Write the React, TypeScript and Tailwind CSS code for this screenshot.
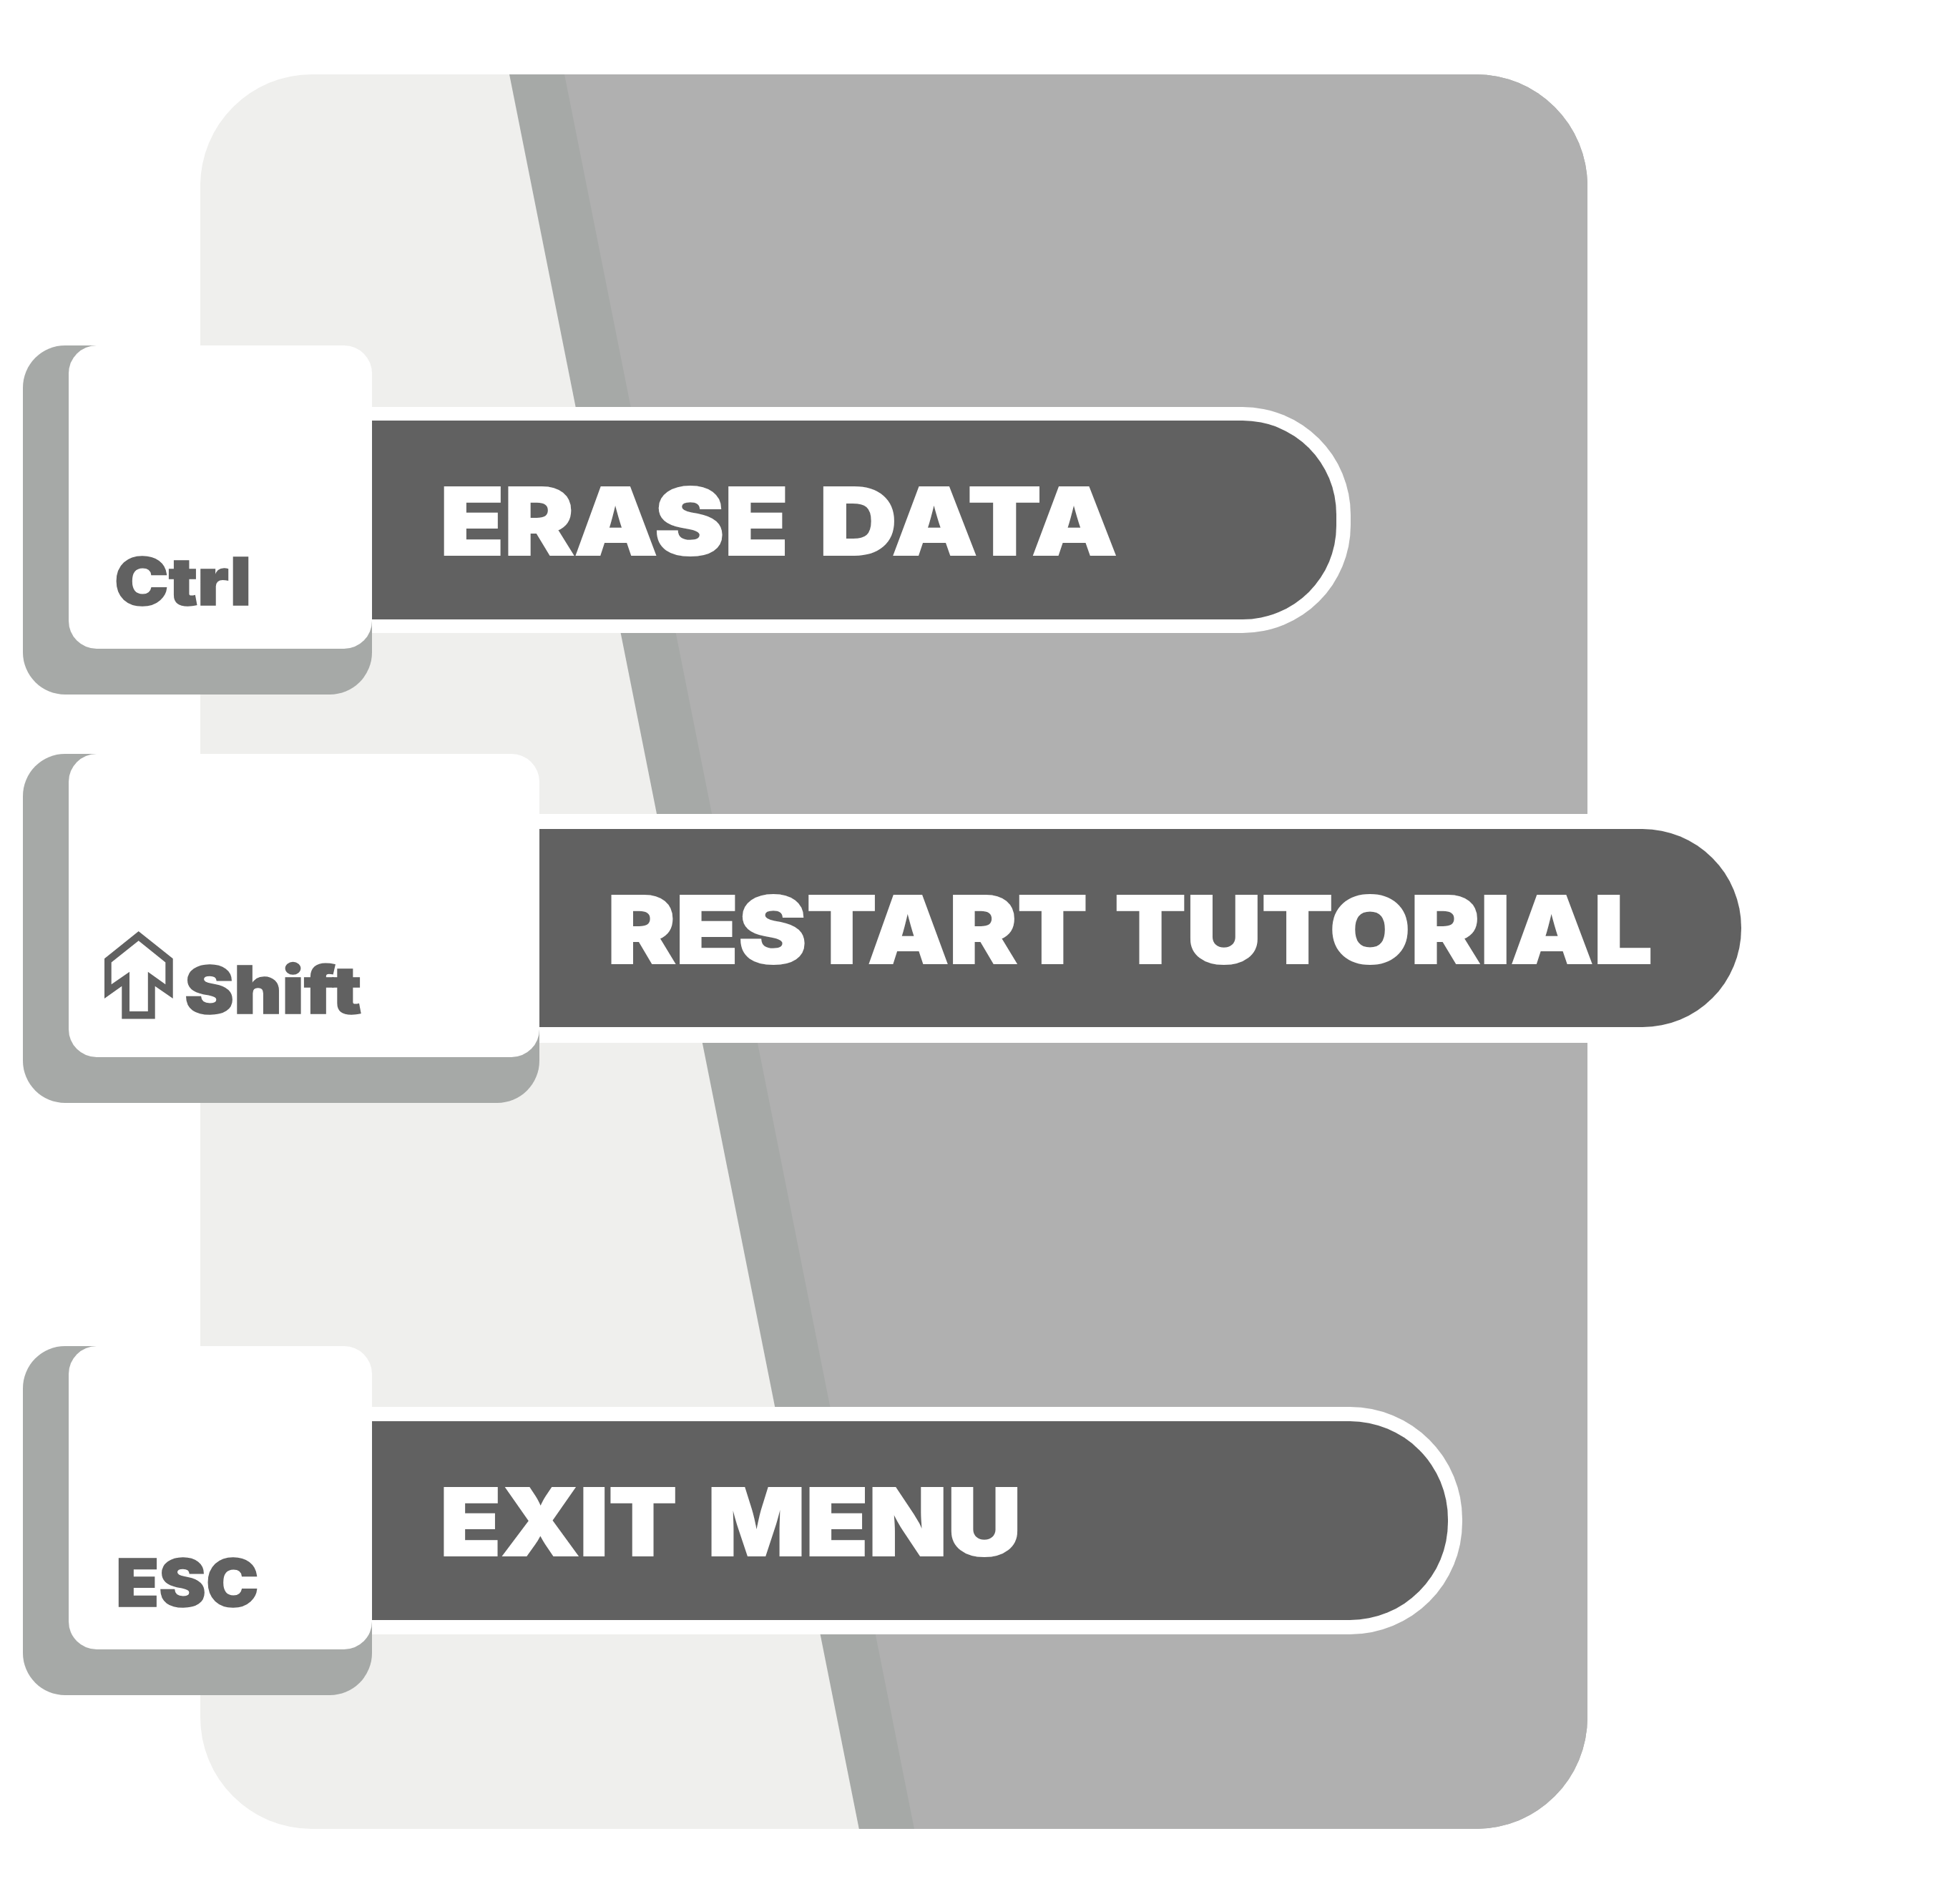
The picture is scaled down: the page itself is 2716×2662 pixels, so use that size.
import React from "react";

function Backdrop() {
  return (
    <div className="ml-[280px] mt-[104px] h-[2453px] w-[1939px] overflow-hidden rounded-[156px] bg-[#efefed]">
      <svg viewBox="0 0 1939 2453" className="block h-full w-full">
        <polygon points="432,0 1939,0 1939,2453 920.8,2453" fill="#a6a9a7" />
        <polygon points="509,0 1939,0 1939,2453 998,2453" fill="#b0b0b0" />
      </svg>
    </div>
  );
}

function ShiftArrow() {
  return (
    <svg viewBox="0 0 96 123" className="mb-[53.5px] h-[123px] w-[96px] shrink-0">
      <path
        fill="#616161"
        fillRule="evenodd"
        d="M47.7 0 95.7 38.3V94L70.7 76.7V122.5H24.3V76.7L0 94V38.3ZM47.7 13.3 9.7 43.5V74.3L35 56.8V112H60.8V56.8L85.3 74.3V43.5Z"
      />
    </svg>
  );
}

function KeyCap({ wide = false, children }: { wide?: boolean; children: React.ReactNode }) {
  return (
    <div className={`h-[488px] shrink-0 rounded-[59px] bg-[#a6a9a7] pl-[64px] ${wide ? "w-[722px]" : "w-[488px]"}`}>
      <div className="flex h-[424px] items-end rounded-[39px] bg-white">{children}</div>
    </div>
  );
}

const keyText =
  "mb-[48px] block origin-left whitespace-nowrap text-[91.7px] leading-none font-black text-[#616161] [-webkit-text-stroke:1.5px_#616161]";
const barText =
  "flex text-[130.7px] leading-none font-black text-white [-webkit-text-stroke:2px_white]";

export default function App() {
  return (
    <div className="grid h-[2662px] w-[2716px] overflow-hidden bg-white font-['Inter',sans-serif]">
      <div className="col-start-1 row-start-1">
        <Backdrop />
      </div>

      <div className="col-start-1 row-start-1 flex flex-col pt-[483px] pl-[32.4px]">
        <div className="flex items-start">
          <KeyCap>
            <span className={`${keyText} ml-[63.5px] scale-x-[1.104]`}>Ctrl</span>
          </KeyCap>
          <div className="mt-[86px] h-[316px] w-[1367.5px] rounded-r-[151px] bg-white pt-[19px] pr-[19.5px] pb-[19px]">
            <div className="h-full rounded-r-[131px] bg-[#616161] pt-[76px] pl-[94.2px]">
              <div className={barText}>
                <span className="block w-[530.2px] shrink-0"><span className="inline-block origin-left scale-x-[1.121]">ERASE</span></span>
                <span className="inline-block origin-left scale-x-[1.153]">DATA</span>
              </div>
            </div>
          </div>
        </div>

        <div className="mt-[83px] flex items-start">
          <KeyCap wide>
            <div className="ml-[49.5px] flex items-end">
              <ShiftArrow />
              <span className={`${keyText} ml-[16.5px] scale-x-[1.1295]`}>Shift</span>
            </div>
          </KeyCap>
          <div className="mt-[83.6px] h-[320px] w-[1700px] rounded-r-[160px] bg-white pt-[21.5px] pr-[20.5px] pb-[21.5px]">
            <div className="h-full rounded-r-[138px] bg-[#616161] pt-[76.3px] pl-[94.2px]">
              <div className={barText}>
                <span className="block w-[709px] shrink-0"><span className="inline-block origin-left scale-x-[1.095]">RESTART</span></span>
                <span className="inline-block origin-left scale-x-[1.116]">TUTORIAL</span>
              </div>
            </div>
          </div>
        </div>

        <div className="mt-[340.4px] flex items-start">
          <KeyCap>
            <span className={`${keyText} ml-[65.5px] scale-x-[1.074]`}>ESC</span>
          </KeyCap>
          <div className="mt-[84.4px] h-[318px] w-[1523.5px] rounded-r-[157px] bg-white pt-[20.5px] pr-[19.5px] pb-[20px]">
            <div className="h-full rounded-r-[137px] bg-[#616161] pt-[76px] pl-[95px]">
              <div className={barText}>
                <span className="block w-[373.3px] shrink-0"><span className="inline-block origin-left scale-x-[1.067]">EXIT</span></span>
                <span className="inline-block origin-left scale-x-[1.097]">MENU</span>
              </div>
            </div>
          </div>
        </div>
      </div>
    </div>
  );
}
